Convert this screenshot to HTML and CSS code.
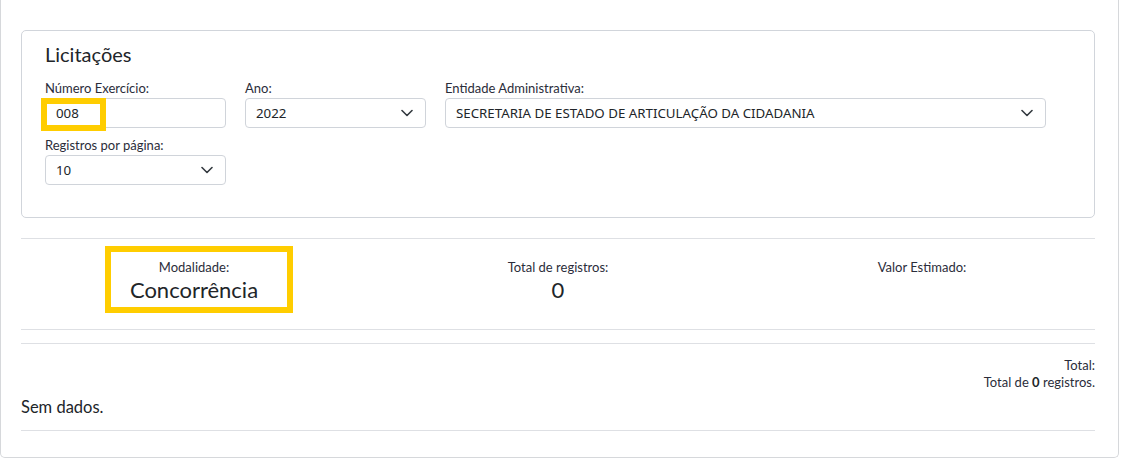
FILE: index.html
```html
<!DOCTYPE html>
<html lang="pt-BR">
<head>
<meta charset="utf-8">
<title>Licitações</title>
<link rel="stylesheet" href="styles.css">
</head>
<body>
<div class="page">
  <div class="card">
    <section class="filters">
      <h2 class="filters-title">Licitações</h2>
      <div class="filter-row">
        <div class="field field-num">
          <label class="field-label">Número Exercício:</label>
          <div class="control">008</div>
        </div>
        <div class="field field-ano">
          <label class="field-label">Ano:</label>
          <div class="control select">2022
            <svg class="chev" viewBox="0 0 12 8" width="12" height="8"><path d="M1 1.5 L6 6.5 L11 1.5" fill="none" stroke="#343a40" stroke-width="1.6" stroke-linecap="round" stroke-linejoin="round"/></svg>
          </div>
        </div>
        <div class="field field-ent">
          <label class="field-label">Entidade Administrativa:</label>
          <div class="control select">SECRETARIA DE ESTADO DE ARTICULAÇÃO DA CIDADANIA
            <svg class="chev" viewBox="0 0 12 8" width="12" height="8"><path d="M1 1.5 L6 6.5 L11 1.5" fill="none" stroke="#343a40" stroke-width="1.6" stroke-linecap="round" stroke-linejoin="round"/></svg>
          </div>
        </div>
      </div>
      <div class="filter-row">
        <div class="field field-num">
          <label class="field-label">Registros por página:</label>
          <div class="control select">10
            <svg class="chev" viewBox="0 0 12 8" width="12" height="8"><path d="M1 1.5 L6 6.5 L11 1.5" fill="none" stroke="#343a40" stroke-width="1.6" stroke-linecap="round" stroke-linejoin="round"/></svg>
          </div>
        </div>
      </div>
    </section>

    <hr class="rule rule-top">

    <div class="stats">
      <div class="stat">
        <div class="stat-label">Modalidade:</div>
        <div class="stat-value">Concorrência</div>
      </div>
      <div class="stat">
        <div class="stat-label">Total de registros:</div>
        <div class="stat-value">0</div>
      </div>
      <div class="stat">
        <div class="stat-label">Valor Estimado:</div>
        <div class="stat-value"></div>
      </div>
    </div>

    <hr class="rule rule-a">
    <hr class="rule rule-b">

    <div class="totals">
      <div>Total:</div>
      <div>Total de <b>0</b> registros.</div>
    </div>

    <p class="empty">Sem dados.</p>
    <hr class="rule rule-end">
  </div>

  <div class="mark mark-num"></div>
  <div class="mark mark-mod"></div>
</div>
</body>
</html>
```

FILE: styles.css
```css
* { box-sizing: border-box; }
html, body { margin: 0; padding: 0; background: #fff; }
body {
  font-family: Lato, "Noto Sans", sans-serif;
  color: #212529;
  width: 1137px;
  height: 476px;
  overflow: hidden;
}
.page { position: relative; width: 1137px; }

.card {
  width: 1119px;
  border: 1px solid #d6d8db;
  border-top: none;
  border-radius: 0 0 5px 5px;
  padding: 30px 23px 26px 20px;
}

.filters {
  border: 1px solid #d1d5db;
  border-radius: 5px;
  padding: 10px 23px 32px 23px;
}
.filters-title {
  margin: 0 0 13px 0;
  font-size: 20px;
  line-height: 26px;
  font-weight: 400;
  color: #212529;
}
.filter-row { display: flex; gap: 19px; margin-bottom: 9px; }
.filter-row:last-child { margin-bottom: 0; }
.field { display: flex; flex-direction: column; }
.field-num { width: 181px; }
.field-ano { width: 181px; }
.field-ent { width: 601px; }
.field-label {
  font-size: 13px;
  line-height: 16px;
  margin-bottom: 2px;
  color: #2b2d3a;
}
.control {
  height: 30px;
  border: 1px solid #d0d4da;
  border-radius: 4px;
  padding: 0 10px;
  display: flex;
  align-items: center;
  font-family: "Noto Sans", "Open Sans", sans-serif;
  font-size: 13.3px;
  color: #212529;
}
.select { justify-content: space-between; }
.chev { margin-right: 2px; flex: none; }

.rule {
  border: none;
  border-top: 1px solid #dee0e4;
  margin: 0;
}
.rule-top { margin-top: 20px; }

.stats {
  display: grid;
  grid-template-columns: repeat(3, 1fr);
  margin: 0 -9px;
  padding: 20px 0 24px;
  text-align: center;
}
.stat-label { font-size: 13px; line-height: 16px; color: #2b2d3a; }
.stat-value { font-size: 22px; line-height: 30px; min-height: 30px; color: #212529; }

.rule-b { margin-top: 13px; }

.totals {
  text-align: right;
  font-size: 13px;
  line-height: 17px;
  padding-top: 13px;
  color: #2b2d3a;
}
.totals b { font-weight: 700; color: #212529; }

.empty {
  margin: 6px 0 13px;
  font-size: 16.5px;
  line-height: 20px;
}

.mark {
  position: absolute;
  border: 6px solid #ffcd00;
}
.mark-num { left: 41px; top: 98px; width: 65px; height: 33px; }
.mark-mod { left: 105px; top: 246px; width: 188px; height: 67px; }
```
